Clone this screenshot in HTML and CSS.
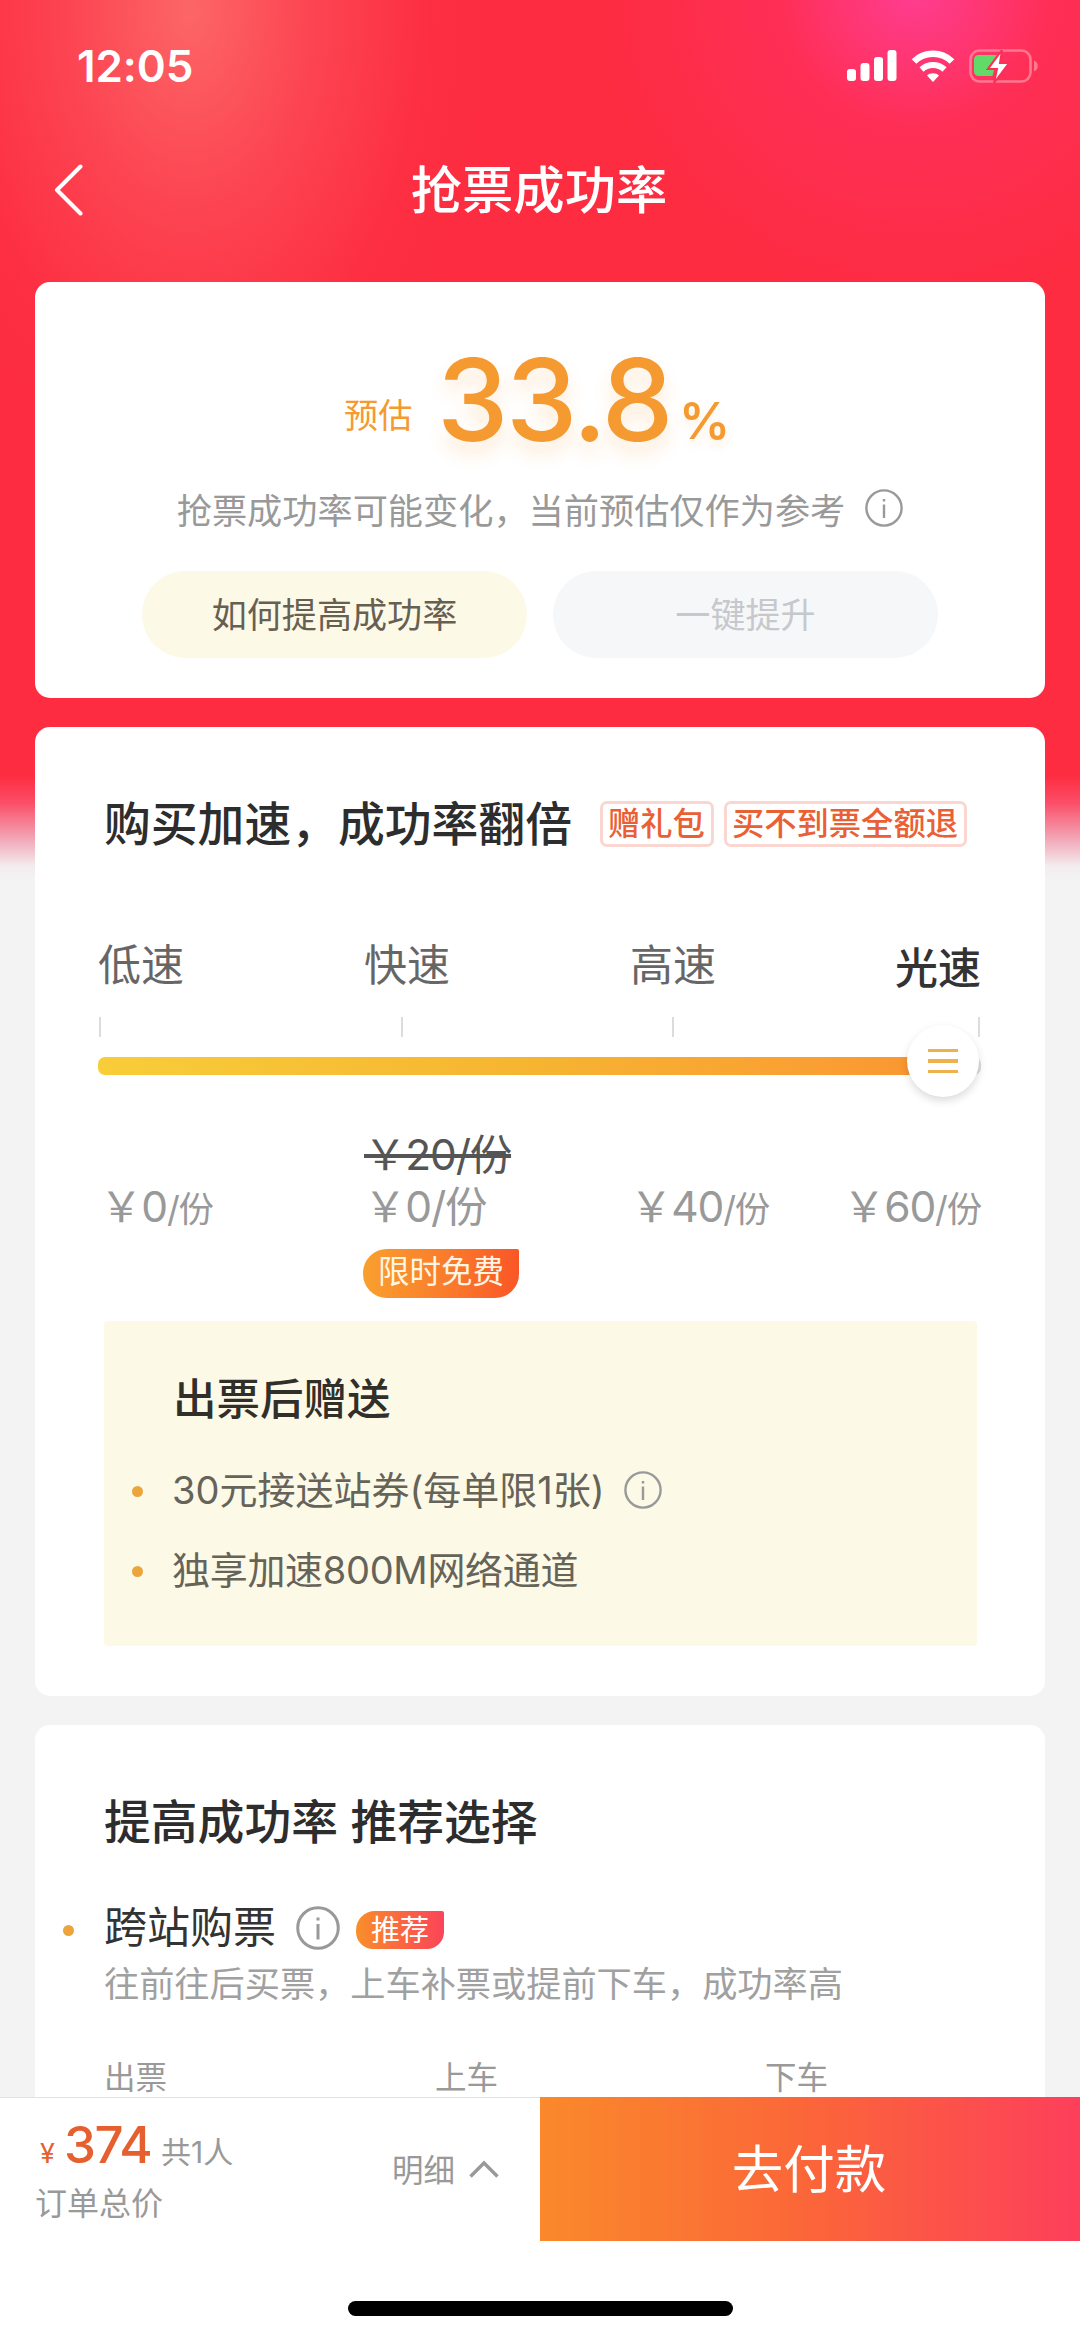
FILE: index.html
```html
<!DOCTYPE html>
<html lang="zh-CN">
<head>
<meta charset="utf-8">
<title>抢票成功率</title>
<link rel="stylesheet" href="styles.css">
</head>
<body>
<div class="screen">
  <header class="status">
    <span class="time">12:05</span>
    <svg class="signal" width="50" height="32" viewBox="0 0 50 32" fill="#fff">
      <rect x="0" y="19" width="9" height="12" rx="3"/><rect x="13.500" y="13" width="9" height="18" rx="3"/><rect x="27" y="7" width="9" height="24" rx="3"/><rect x="40.500" y="0" width="9" height="31" rx="3"/>
    </svg>
    <svg class="wifi" width="44" height="32" viewBox="0 0 44 32" fill="none" stroke="#fff">
      <path d="M3 11.500C13 1 31 1 41 11.500" stroke-width="6.500"/><path d="M10.500 19.500C17 13.500 27 13.500 33.500 19.500" stroke-width="6"/><path d="M22 32l-6-6.500c3-3 9-3 12 0z" fill="#fff" stroke="none"/>
    </svg>
    <svg class="battery" width="70" height="34" viewBox="0 0 70 34">
      <rect x="1.500" y="1.500" width="60" height="31" rx="9" fill="none" stroke="#ff7890" stroke-width="2.600"/>
      <path d="M65 11.500c5 2 5 9 0 11z" fill="#ff7890"/>
      <path d="M9.500 6H28L17 21h8l-1.500 6H9.500A4.500 4.500 0 0 1 5 22.500v-12A4.500 4.500 0 0 1 9.500 6z" fill="#62da68"/>
      <path d="M33 1L19 20h9l-3 14 15-20h-9z" fill="#fff" stroke="#fd2f58" stroke-width="2"/>
    </svg>
  </header>

  <nav class="nav">
    <svg class="back" width="29" height="52" viewBox="0 0 29 52" fill="none" stroke="#fff" stroke-width="4" stroke-linecap="round" stroke-linejoin="round"><path d="M26.500 2.500L3 26l23.500 23.500"/></svg>
    <h1>抢票成功率</h1>
  </nav>

  <main class="cards">
    <section class="card rate">
      <div class="rate-row">
        <span class="rate-label">预估</span><span class="rate-value">33.8</span><span class="rate-unit">%</span>
      </div>
      <p class="rate-note">抢票成功率可能变化，当前预估仅作为参考
        <svg class="info" viewBox="0 0 38 38"><circle cx="19" cy="19" r="17.600"/><path d="M19 10v2.500M19 15.500V29"/></svg>
      </p>
      <div class="rate-actions">
        <button class="pill pill-how">如何提高成功率</button>
        <button class="pill pill-off">一键提升</button>
      </div>
    </section>

    <section class="card boost">
      <div class="boost-head">
        <h2>购买加速，成功率翻倍</h2>
        <span class="tag">赠礼包</span>
        <span class="tag">买不到票全额退</span>
      </div>
      <div class="cols speeds">
        <span>低速</span><span>快速</span><span>高速</span><span class="on">光速</span>
      </div>
      <div class="ticks"><i></i><i></i><i></i><i></i></div>
      <div class="slider">
        <div class="track"></div>
        <div class="knob"><i></i><i></i><i></i></div>
      </div>
      <div class="cols prices">
        <div class="price">￥0<small>/份</small></div>
        <div class="price"><del>￥20/份</del><span>￥0/份</span><b class="free">限时免费</b></div>
        <div class="price">￥40<small>/份</small></div>
        <div class="price">￥60<small>/份</small></div>
      </div>
      <div class="gift">
        <h3>出票后赠送</h3>
        <ul>
          <li>30元接送站券(每单限1张)
            <svg class="info" viewBox="0 0 38 38"><circle cx="19" cy="19" r="17.600"/><path d="M19 10v2.500M19 15.500V29"/></svg>
          </li>
          <li>独享加速800M网络通道</li>
        </ul>
      </div>
    </section>

    <section class="card options">
      <h2>提高成功率 推荐选择</h2>
      <div class="option">
        <span class="option-name">跨站购票</span>
        <svg class="info info-lg" viewBox="0 0 38 38"><circle cx="19" cy="19" r="17.500"/><path d="M19 10v2.500M19 15.500V29"/></svg>
        <b class="hot">推荐</b>
      </div>
      <p class="option-note">往前往后买票，上车补票或提前下车，成功率高</p>
      <div class="stations"><span>出票</span><span>上车</span><span>下车</span></div>
    </section>
  </main>

  <footer class="footer">
    <div class="bar">
      <div class="total">
        <div class="sum"><span class="yen">¥</span><span class="amount">374</span><span class="people">共1人</span></div>
        <div class="sum-label">订单总价</div>
      </div>
      <div class="detail"><span>明细</span>
        <svg width="30" height="18" viewBox="0 0 30 18" fill="none" stroke="#999" stroke-width="3.400"><path d="M1.500 16.500L15 3l13.500 13.500"/></svg>
      </div>
      <button class="pay">去付款</button>
    </div>
    <div class="home"></div>
  </footer>
</div>
</body>
</html>
```
FILE: styles.css
```css
* { box-sizing: border-box; margin: 0; padding: 0; }

body {
  font-family: Inter, "Noto Sans CJK SC", sans-serif;
  background: #f3f3f3;
  color: #333;
}

h1, h2, h3 { font-weight: 500; }
button { border: 0; font-family: inherit; }
i { display: block; }

.screen {
  width: 1080px;
  height: 2339px;
  overflow: hidden;
  display: flex;
  flex-direction: column;
  background:
    radial-gradient(circle 330px at 915px -10px, rgba(255, 62, 150, .95), rgba(255, 50, 110, .45) 42%, rgba(253, 44, 64, 0)) no-repeat,
    radial-gradient(ellipse 320px 510px at 190px 10px, rgba(252, 112, 110, .85), rgba(252, 90, 98, .5) 40%, rgba(253, 60, 76, .15) 75%, rgba(253, 44, 64, 0)) no-repeat,
    linear-gradient(#fd2c40 775px, #fb4e68 803px, #f2a9b9 840px, #f3ecee 866px, #f3f3f3 880px);
}

/* Status bar */
.status {
  height: 132px;
  padding: 0 41px 0 77px;
  display: flex;
  align-items: center;
}
.time {
  flex: 1;
  font-size: 44px;
  font-weight: 600;
  letter-spacing: -.1px;
  color: #fff;
}
.wifi { margin: 0 14px 0 14px; }

.nav {
  height: 150px;
  padding: 0 54px 36px;
  display: grid;
  grid-template-columns: 29px 1fr 29px;
  align-items: center;
  text-align: center;
  color: #fff;
}
.nav .back { margin-top: 2px; }
.nav h1 { font-size: 51.300px; line-height: 60px; margin: 1px 2px 0 0; }

/* Cards */
.cards {
  height: 1815px;
  overflow: hidden;
  padding: 0 35px;
  display: flex;
  flex-direction: column;
  gap: 29px;
}
.card { flex: none; background: #fff; border-radius: 15px; }
.card h2 { font-size: 46.800px; line-height: 60px; color: #2d2d2d; }

.info {
  width: 38px;
  height: 38px;
  flex: none;
  fill: none;
  stroke: #999;
  stroke-width: 2.400;
}
.info-lg { width: 44px; height: 44px; stroke-width: 2.600; }

.rate { height: 416px; padding-top: 57px; }
.rate-row {
  height: 120px;
  padding-left: 309px;
  display: flex;
  align-items: center;
  color: #f59a31;
}
.rate-label { width: 93px; font-size: 34.200px; margin-top: 28px; }
.rate-value {
  width: 242px;
  font-size: 114px;
  font-weight: 500;
  line-height: 120px;
  letter-spacing: -2.500px;
  margin-top: 2px;
  text-shadow: 0 12px 18px rgba(245, 154, 49, .2);
}
.rate-unit {
  font-size: 51px;
  font-weight: 600;
  margin-top: 43px;
  letter-spacing: -1px;
  text-shadow: 0 6px 10px rgba(245, 154, 49, .15);
}
.rate-note {
  display: flex;
  align-items: center;
  justify-content: center;
  gap: 20px;
  margin-top: 24px;
  height: 50px;
  font-size: 35.200px;
  color: #999;
}
.rate-actions { display: flex; justify-content: center; gap: 26px; margin-top: 38px; }
.pill { width: 385px; height: 87px; padding-bottom: 4px; border-radius: 44px; font-size: 35.100px; }
.pill-how { background: #fdf9e7; color: #666053; }
.pill-off { background: #f6f7f9; color: #c6c8cb; }

.boost { height: 969px; padding: 67px 64px 0 63px; }
.boost-head { display: flex; align-items: center; padding-left: 6px; gap: 10px; }
.boost-head h2 { width: 486px; white-space: nowrap; }
.tag {
  height: 46px;
  padding: 0 6px 0 5px;
  border: 3px solid #fbd6d0;
  border-radius: 7px;
  font-size: 32.300px;
  font-weight: 500;
  line-height: 40px;
  color: #ea6035;
  white-space: nowrap;
}

.cols {
  display: grid;
  grid-template-columns: 266px 266px 1fr auto;
}
.speeds { margin-top: 83px; height: 56px; line-height: 56px; font-size: 43px; color: #666; }
.speeds .on { color: #333; font-weight: 500; padding-top: 3px; }

.ticks {
  margin-top: 24px;
  height: 20px;
  display: grid;
  grid-template-columns: 302px 271px 1fr 3px;
  padding-left: 1px;
}
.ticks i { width: 2px; background: #dcdcdc; }

.slider { position: relative; height: 18px; margin-top: 20px; }
.track { height: 18px; border-radius: 7px; background: linear-gradient(90deg, #f8cd39, #f6b431 50%, #fa9f33 82%, #f99530 95%, #ddd 98%); }
.knob {
  position: absolute;
  right: 2px;
  top: -32px;
  width: 72px;
  height: 72px;
  border-radius: 50%;
  background: #fff;
  box-shadow: 0 4px 9px rgba(0, 0, 0, .14);
  display: flex;
  flex-direction: column;
  align-items: center;
  justify-content: center;
  gap: 7px;
}
.knob i { width: 30px; height: 3.500px; background: #efb04e; }

.prices { margin-top: 51px; height: 175px; font-size: 42.500px; line-height: 52px; color: #999; align-items: start; }
.price { padding-top: 55px; white-space: nowrap; letter-spacing: -1.200px; }
.price:first-child { padding-left: 2px; }
.price small { font-size: 35.500px; }
.price del, .price span { display: block; width: max-content; }
.price:nth-child(2) { padding-top: 3px; }
.price del { color: #555; }
.free {
  display: block;
  width: 156px;
  height: 49px;
  margin: 16px 0 0 -1px;
  border-radius: 24px 2px 24px 24px;
  background: linear-gradient(90deg, #f9a02e, #fa772b 60%, #fa5626);
  font-size: 31.500px;
  font-weight: 400;
  line-height: 45px;
  letter-spacing: 0;
  text-align: center;
  color: #fff5e3;
}

.gift {
  width: 873px;
  height: 325px;
  margin: 20px 0 0 6px;
  padding: 46px 0 0 69px;
  border-radius: 4px;
  background: #fdf9e7;
}
.gift h3 { font-size: 43.500px; line-height: 64px; color: #302f2a; }
.gift ul { list-style: none; margin-top: 18px; }
.gift li {
  height: 80px;
  padding-bottom: 4px;
  display: flex;
  align-items: center;
  gap: 18px;
  font-size: 38px;
  color: #666359;
}
.gift li + li { letter-spacing: -.300px; }
.gift .info { margin: 6px 0 0 1px; }
.gift li::before,
.option::before {
  content: "";
  width: 11px;
  height: 11px;
  margin: 9px 11px 0 -41px;
  border-radius: 50%;
  background: #eda53b;
}

.options { height: 500px; padding: 67px 69px 0; }
.option { display: flex; align-items: center; height: 64px; margin-top: 43px; }
.option::before { margin: 6px 30px 0 -41px; }
.option-name { font-size: 43px; color: #333; line-height: 60px; }
.option .info { margin: 1px 16px 0 20px; }
.hot {
  width: 88px;
  height: 38px;
  margin-top: 5px;
  border-radius: 19px 2px 17px 17px;
  background: linear-gradient(90deg, #f98f2b, #fb6740 50%, #fb4459);
  font-size: 29px;
  font-weight: 400;
  line-height: 39px;
  text-align: center;
  color: #fff;
}
.option-note { font-size: 35.200px; line-height: 48px; margin-top: 1px; color: #a0a0a0; }
.stations {
  display: grid;
  grid-template-columns: 331px 330px 1fr;
  margin-top: 50px;
  font-size: 31.500px;
  line-height: 40px;
  color: #999;
}

/* Checkout bar */
.footer { flex: 1; background: #fff; }
.bar { display: flex; height: 144px; border-top: 1px solid #e2e2e2; }
.total { width: 392px; padding: 16px 0 0 35px; }
.sum { display: flex; align-items: baseline; height: 62px; line-height: 62px; color: #e65f2e; }
.yen { width: 29px; padding-left: 5px; font-size: 27px; }
.amount { width: 97px; font-size: 51px; font-weight: 500; letter-spacing: -1.500px; }
.people { font-size: 30px; color: #999; }
.sum-label { font-size: 32px; line-height: 40px; margin-top: 8px; color: #999; }
.detail { width: 148px; padding-bottom: 1px; display: flex; align-items: center; gap: 14px; font-size: 31.500px; color: #999; }
.detail span { margin-top: -2px; }
.pay {
  width: 540px;
  height: 144px;
  margin-top: -1px;
  padding: 0 2px 8px 0;
  background: linear-gradient(90deg, #fa892b, #fb6738 48%, #fd3f5b);
  font-size: 51.500px;
  color: #fff;
}
.home { width: 385px; height: 15px; margin: 60px auto 0; border-radius: 8px; background: #000; }
```
